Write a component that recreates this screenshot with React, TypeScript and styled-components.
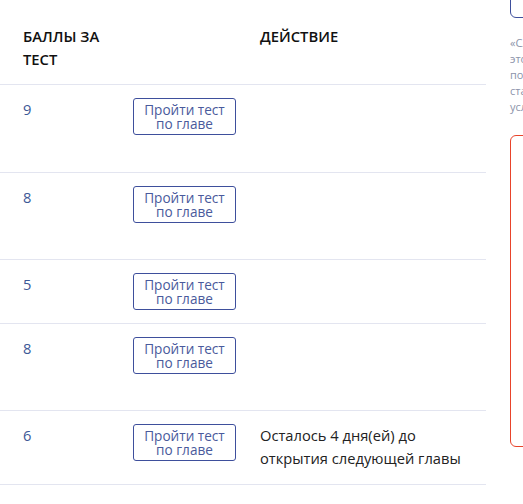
import styled, { createGlobalStyle } from "styled-components";

const GlobalStyle = createGlobalStyle`
    html, body {
        margin: 0;
        padding: 0;
        background: #ffffff;
        overflow: hidden;
    }
    body {
        font-family: "Open Sans", "Noto Sans", sans-serif;
    }
`;

const Page = styled.div`
    display: flex;
    align-items: flex-start;
    gap: 24px;
    width: 800px;
`;

const Table = styled.div`
    width: 486px;
    flex-shrink: 0;
    display: flex;
    flex-direction: column;
`;

const Row = styled.div<{ $height?: number }>`
    display: grid;
    grid-template-columns: 110px 127px 1fr;
    align-items: start;
    border-bottom: 1px solid #e3e5f0;
    box-sizing: border-box;
    height: ${props => (props.$height ? `${props.$height}px` : "auto")};
`;

const HeadCell = styled.div`
    padding: 25px 0 12px 23px;
    font-size: 14.8px;
    line-height: 23px;
    font-weight: 600;
    color: #111111;
    text-transform: uppercase;
`;

const Cell = styled.div`
    padding: 13px 0 13px 23px;
    font-size: 14.7px;
    line-height: 23px;
    color: #222222;
`;

const Score = styled(Cell)`
    color: #3d5896;
`;

const TestButton = styled.button`
    width: 103px;
    height: 37px;
    box-sizing: border-box;
    padding: 3px 2px;
    background: #ffffff;
    border: 1px solid #3e4f9c;
    border-radius: 3px;
    font-family: inherit;
    font-size: 13.6px;
    line-height: 14px;
    color: #4a5a9c;
    cursor: pointer;
`;

const Sidebar = styled.aside`
    width: 230px;
    flex-shrink: 0;
    display: flex;
    flex-direction: column;
`;

const TopBox = styled.div`
    margin-top: -20px;
    height: 38px;
    box-sizing: border-box;
    border: 1px solid #3e4f9c;
    border-radius: 6px;
`;

const Note = styled.p`
    margin: 17px 0 0;
    font-size: 11px;
    line-height: 16px;
    color: #8b93aa;
    white-space: nowrap;
`;

const AlertBox = styled.div`
    margin-top: 20px;
    height: 312px;
    box-sizing: border-box;
    border: 1px solid #e8442b;
    border-radius: 6px;
`;

interface ResultRow {
    score: number;
    height: number;
    action?: string[];
}

const rows: ResultRow[] = [
    { score: 9, height: 88 },
    { score: 8, height: 87 },
    { score: 5, height: 64 },
    { score: 8, height: 87 },
    { score: 6, height: 74, action: ["Осталось 4 дня(ей) до", "открытия следующей главы"] },
];

function App() {
    return (
        <>
            <GlobalStyle />
            <Page>
                <Table>
                    <Row $height={85}>
                        <HeadCell>Баллы за тест</HeadCell>
                        <HeadCell />
                        <HeadCell>Действие</HeadCell>
                    </Row>
                    {rows.map((row, i) => (
                        <Row key={i} $height={row.height}>
                            <Score>{row.score}</Score>
                            <Cell>
                                <TestButton>Пройти тест по главе</TestButton>
                            </Cell>
                            <Cell>
                                {row.action?.map((line, j) => (
                                    <div key={j}>{line}</div>
                                ))}
                            </Cell>
                        </Row>
                    ))}
                </Table>
                <Sidebar>
                    <TopBox />
                    <Note>
                        «Следующая глава» откроется
                        <br />
                        этого раздела станет доступна
                        <br />
                        после прохождения теста
                        <br />
                        старой главы при выполнении
                        <br />
                        условий обучения
                    </Note>
                    <AlertBox />
                </Sidebar>
            </Page>
        </>
    );
}

export default App;
